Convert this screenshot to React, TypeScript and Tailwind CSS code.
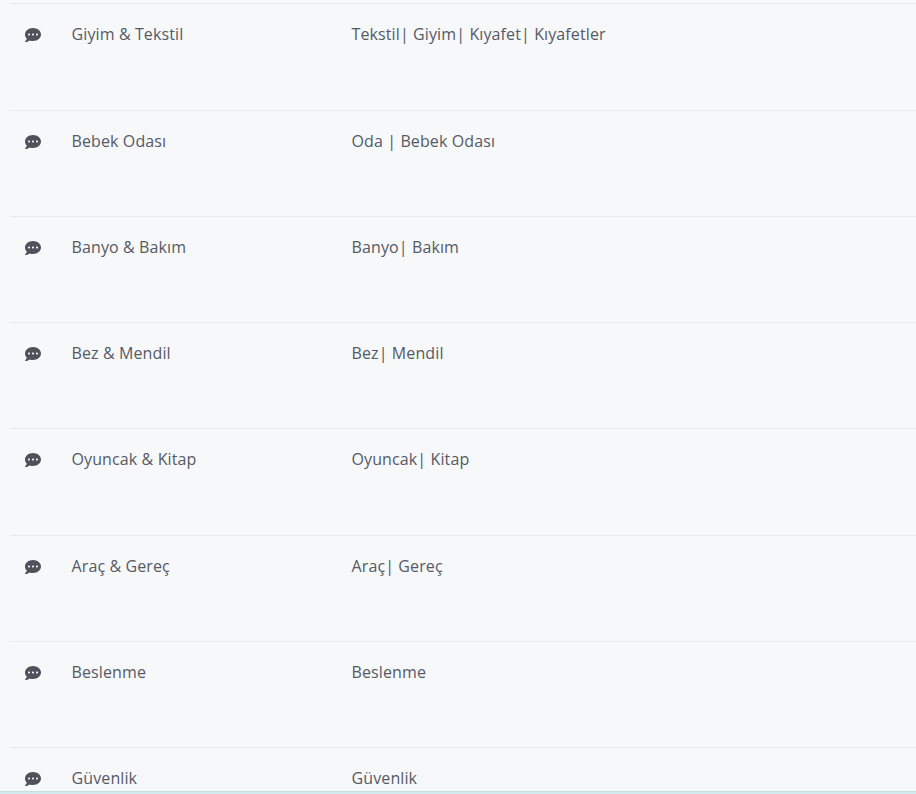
import { FaCommentDots } from "react-icons/fa";

const rows = [
  { name: "Giyim & Tekstil", tags: "Tekstil| Giyim| Kıyafet| Kıyafetler" },
  { name: "Bebek Odası", tags: "Oda | Bebek Odası" },
  { name: "Banyo & Bakım", tags: "Banyo| Bakım" },
  { name: "Bez & Mendil", tags: "Bez| Mendil" },
  { name: "Oyuncak & Kitap", tags: "Oyuncak| Kitap" },
  { name: "Araç & Gereç", tags: "Araç| Gereç" },
  { name: "Beslenme", tags: "Beslenme" },
  { name: "Güvenlik", tags: "Güvenlik" },
];

export default function App() {
  return (
    <div className="flex h-[794px] flex-col overflow-hidden bg-[#f7f8fa] font-['Open_Sans',sans-serif] text-base tracking-[0.115px] text-[#555a64]">
      <div className="min-h-0 flex-1 overflow-hidden pt-[3.3px] pl-[10px]">
        {rows.map((row) => (
          <div key={row.name} className="flex h-[106.25px] border-t border-[#e7e9ec] pt-[18px]">
            <div className="w-[61px] shrink-0 pt-[5px] pl-[15px] text-[#4f525b]">
              <FaCommentDots className="h-[16px] w-[16px]" />
            </div>
            <div className="w-[280px] shrink-0 pl-[0.5px] leading-6">{row.name}</div>
            <div className="pl-[0.5px] leading-6">{row.tags}</div>
          </div>
        ))}
      </div>
      <div className="h-[3px] shrink-0 border-t border-[#c5dde3] bg-[#d2e9ee]" />
    </div>
  );
}
